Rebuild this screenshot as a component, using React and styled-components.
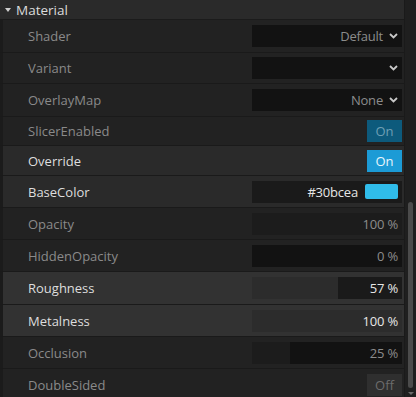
import React from "react";
import styled, { createGlobalStyle } from "styled-components";

const GlobalStyle = createGlobalStyle`
  html, body {
    margin: 0;
    padding: 0;
    background: #222222;
    font-family: "Open Sans", "Noto Sans", sans-serif;
    overflow: hidden;
  }
`;

const Panel = styled.div`
  display: flex;
  width: 416px;
  height: 397px;
  overflow: hidden;
  background: #222222;
`;

const Content = styled.div`
  flex: 1;
  display: flex;
  flex-direction: column;
`;

const Header = styled.div`
  height: 19px;
  flex-shrink: 0;
  display: flex;
  align-items: center;
  gap: 5px;
  padding-left: 5px;
  background: #2a2a2a;
  border-bottom: 1px solid #1b1b1b;
  color: #dcdcdc;
  font-size: 13.5px;
`;

const Caret = styled.span`
  width: 0;
  height: 0;
  border-left: 3.5px solid transparent;
  border-right: 3.5px solid transparent;
  border-top: 4px solid #cfcfcf;
  margin-top: 1px;
`;

const Row = styled.div`
  display: flex;
  flex-shrink: 0;
  align-items: center;
  height: ${(p) => p.$h}px;
  border-bottom: 1px solid #1a1a1a;
  background: ${(p) => (p.$hot ? "#323232" : p.$on ? "#2a2a2a" : "#222222")};
  border-left: 3px solid #1b1b1b;
`;

const Label = styled.div`
  flex: 1;
  padding-left: 25px;
  font-size: 13px;
  color: ${(p) => (p.$on ? "#dedede" : "#8a8a8a")};
`;

const Field = styled.div`
  position: relative;
  width: 150px;
  height: 22px;
  margin-right: 2px;
  display: flex;
  align-items: center;
  justify-content: flex-end;
  gap: 4px;
  padding-right: 4px;
  box-sizing: border-box;
  background: ${(p) => (p.$on ? "#1a1a1a" : "#121212")};
  color: ${(p) => (p.$on ? "#e6e6e6" : "#8c8c8c")};
  font-size: 13px;
  overflow: hidden;
`;

const Fill = styled.div`
  position: absolute;
  left: 0;
  top: 0;
  bottom: 0;
  background: ${(p) => (p.$on ? "#2c2c2c" : "#1c1c1c")};
`;

const FieldText = styled.span`
  position: relative;
  letter-spacing: -0.2px;
`;

const Swatch = styled.div`
  width: 33px;
  height: 15px;
  border-radius: 2px;
  background: ${(p) => p.$color};
  margin-left: 3px;
`;

const Toggle = styled.div`
  width: 35px;
  height: 22px;
  margin-right: 2px;
  display: flex;
  align-items: center;
  justify-content: center;
  font-size: 13px;
  background: ${(p) =>
    p.$state === "on" ? "#1c9bd6" : p.$state === "dim" ? "#0d5a7c" : "#2f2f2f"};
  color: ${(p) =>
    p.$state === "on" ? "#e8f6fc" : p.$state === "dim" ? "#6f9fb4" : "#6c6c6c"};
`;

const Scrollbar = styled.div`
  position: relative;
  width: 11px;
  background: #1f1f1f;
  border-left: 1px solid #1a1a1a;
`;

const Thumb = styled.div`
  position: absolute;
  left: 3px;
  width: 5px;
  top: 202px;
  height: 186px;
  border-radius: 3px;
  background: #4b4b4b;
`;

const DownArrow = styled.div`
  position: absolute;
  left: 3px;
  bottom: 2px;
  width: 0;
  height: 0;
  border-left: 3px solid transparent;
  border-right: 3px solid transparent;
  border-top: 3px solid #6a6a6a;
`;

const Chevron = () => (
  <svg width="9" height="6" viewBox="0 0 9 6" style={{ position: "relative", marginLeft: 2 }}>
    <path d="M1 1 L4.5 4.5 L8 1" fill="none" stroke="#c8c8c8" strokeWidth="1.8" />
  </svg>
);

const rows = [
  { label: "Shader", kind: "select", value: "Default", h: 32 },
  { label: "Variant", kind: "select", value: "", h: 30 },
  { label: "OverlayMap", kind: "select", value: "None", h: 32 },
  { label: "SlicerEnabled", kind: "toggle", state: "dim", value: "On", h: 28 },
  { label: "Override", kind: "toggle", state: "on", value: "On", on: true, h: 29 },
  { label: "BaseColor", kind: "color", value: "#30bcea", on: true, h: 31 },
  { label: "Opacity", kind: "slider", pct: 100, h: 31 },
  { label: "HiddenOpacity", kind: "slider", pct: 0, h: 31 },
  { label: "Roughness", kind: "slider", pct: 57, on: true, hot: true, h: 32 },
  { label: "Metalness", kind: "slider", pct: 100, on: true, hot: true, h: 31 },
  { label: "Occlusion", kind: "slider", pct: 25, h: 31 },
  { label: "DoubleSided", kind: "toggle", state: "off", value: "Off", h: 31 },
];

function Value({ row }) {
  if (row.kind === "toggle") return <Toggle $state={row.state}>{row.value}</Toggle>;
  if (row.kind === "color")
    return (
      <Field $on>
        <FieldText>{row.value}</FieldText>
        <Swatch $color={row.value} />
      </Field>
    );
  if (row.kind === "slider")
    return (
      <Field $on={row.on}>
        <Fill $on={row.on} style={{ width: `${row.pct}%` }} />
        <FieldText>{row.pct} %</FieldText>
      </Field>
    );
  return (
    <Field>
      {row.value && <FieldText>{row.value}</FieldText>}
      <Chevron />
    </Field>
  );
}

export default function App() {
  return (
    <>
      <GlobalStyle />
      <Panel>
        <Content>
          <Header>
            <Caret />
            Material
          </Header>
          {rows.map((r) => (
            <Row key={r.label} $h={r.h} $on={r.on} $hot={r.hot}>
              <Label $on={r.on}>{r.label}</Label>
              <Value row={r} />
            </Row>
          ))}
        </Content>
        <Scrollbar>
          <Thumb />
          <DownArrow />
        </Scrollbar>
      </Panel>
    </>
  );
}
